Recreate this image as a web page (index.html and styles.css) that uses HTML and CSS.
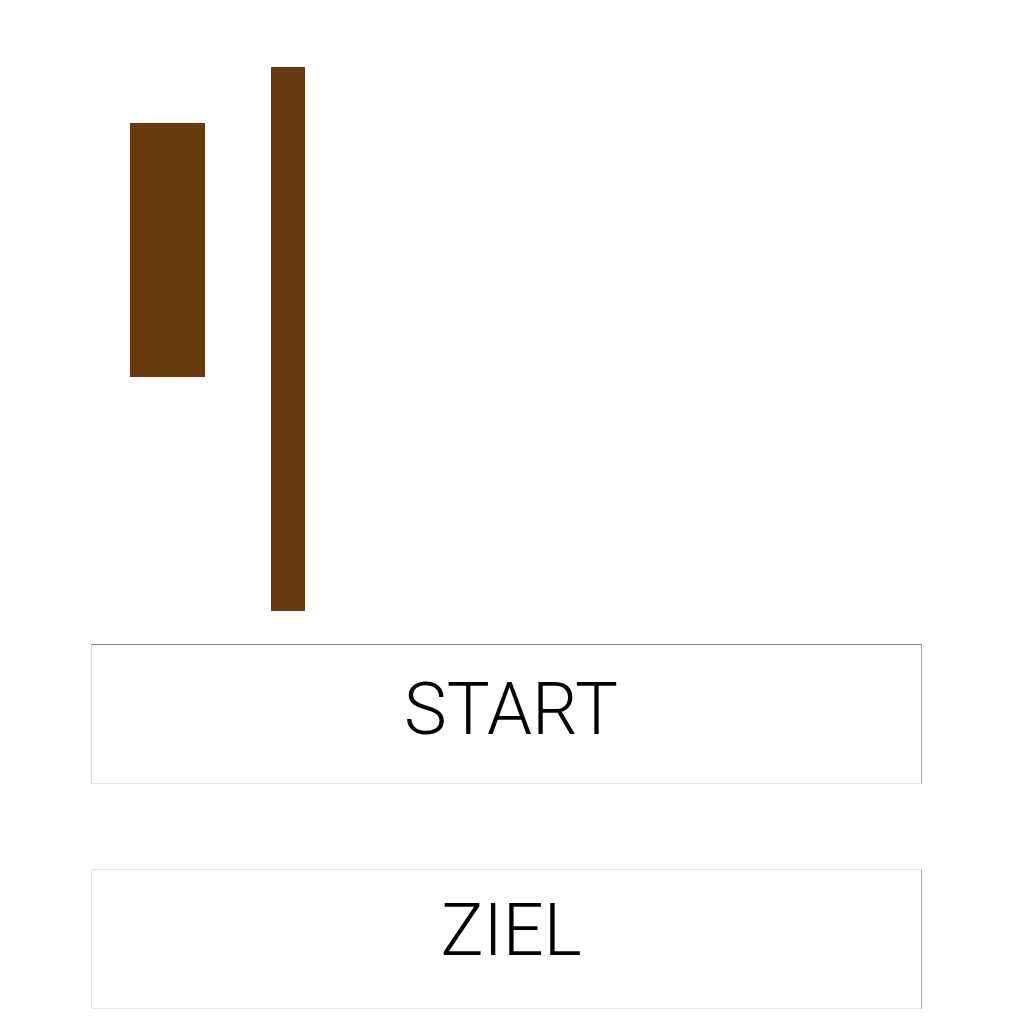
FILE: index.html
```html
<!DOCTYPE html>
<html lang="de">
<head>
<meta charset="utf-8">
<title>Start Ziel</title>
<link rel="stylesheet" href="styles.css">
</head>
<body>
<div class="scene">
  <div class="bar bar-short"></div>
  <div class="bar bar-tall"></div>
</div>
<div class="buttons">
  <div class="box box-start">START</div>
  <div class="box box-goal">ZIEL</div>
</div>
</body>
</html>
```
FILE: styles.css
```css
html, body {
  margin: 0;
  padding: 0;
  background: #ffffff;
}
body {
  width: 1024px;
  height: 1024px;
  overflow: hidden;
  font-family: Roboto, "Liberation Sans", Arial, sans-serif;
}
.scene {
  display: flex;
  align-items: flex-start;
  padding-top: 67px;
  padding-left: 130px;
  height: 544px;
}
.bar {
  background: #683a10;
}
.bar-short {
  width: 75px;
  height: 254px;
  margin-top: 56px;
}
.bar-tall {
  width: 34px;
  height: 544px;
  margin-left: 66px;
}
.buttons {
  display: flex;
  flex-direction: column;
  padding-left: 91px;
  padding-top: 33px;
  gap: 85px;
}
.box {
  box-sizing: border-box;
  width: 831px;
  height: 140px;
  border: 1px solid #dddddd;
  color: #000000;
  font-size: 72px;
  font-weight: 300;
  line-height: 72px;
  text-align: center;
  padding-left: 9px;
}
.box-start {
  border-top-color: #8a8a8a;
  border-left-color: #d0d0d0;
  border-right-color: #a8a8a8;
  border-bottom-color: #e2e2e2;
  padding-top: 29px;
}
.box-goal {
  border-top-color: #e4e4e4;
  border-left-color: #e8e8e8;
  border-right-color: #b0b0b0;
  border-bottom-color: #e8e8e8;
  padding-top: 25px;
}
```
